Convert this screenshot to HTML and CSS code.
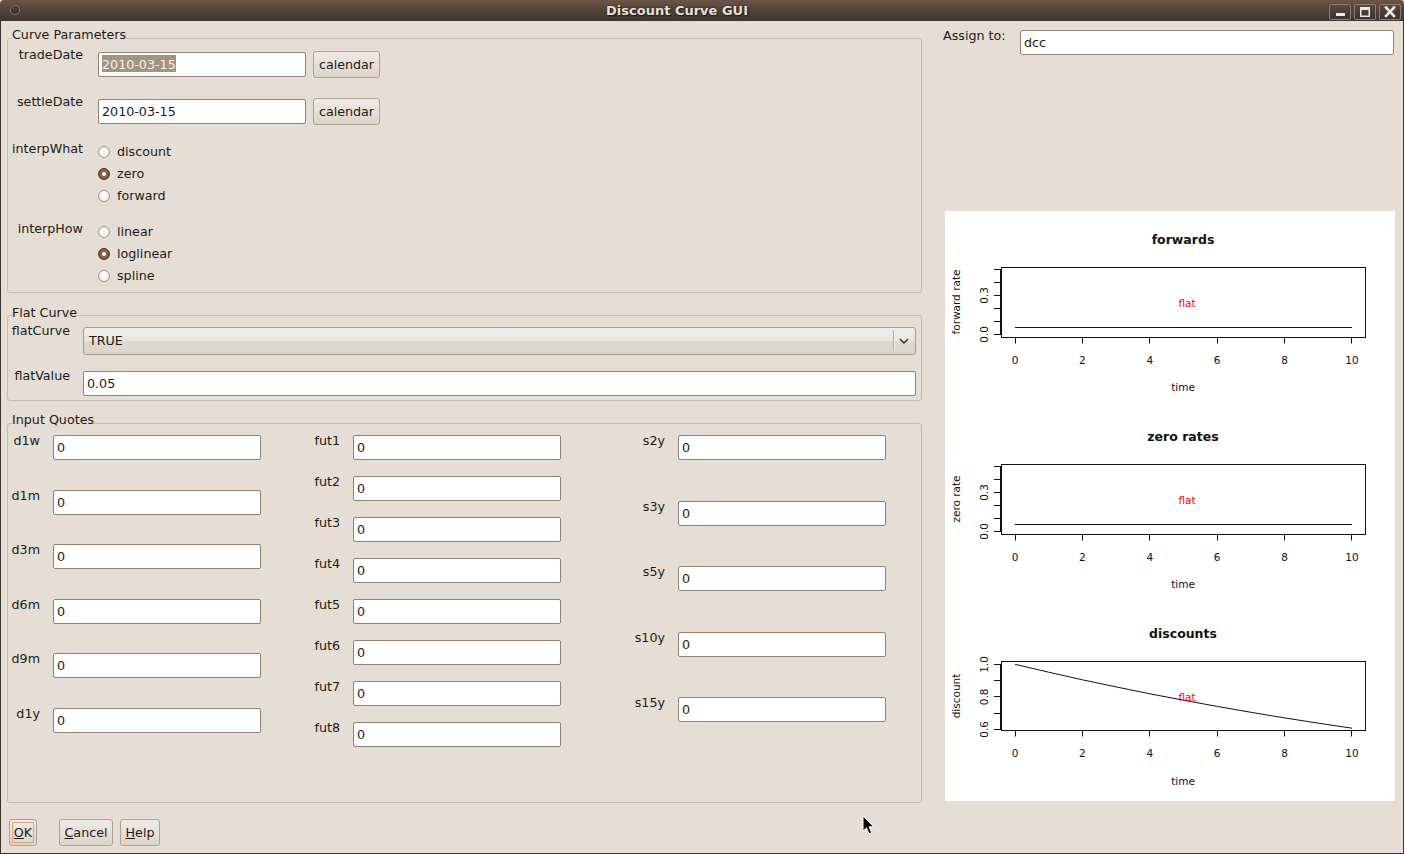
FILE: index.html
```html
<!DOCTYPE html>
<html>
<head>
<meta charset="utf-8">
<title>Discount Curve GUI</title>
<link rel="stylesheet" href="styles.css">
</head>
<body>
<div class="window">
  <div class="titlebar">
    <div class="menu-dot"></div>
    <div class="title">Discount Curve GUI</div>
    <div class="wm-buttons">
      <div class="wm-btn"><svg width="20" height="14" viewBox="0 0 20 14"><rect x="6" y="8" width="9" height="3" fill="#ece8e2"/></svg></div>
      <div class="wm-btn"><svg width="20" height="14" viewBox="0 0 20 14"><rect x="5.75" y="2.75" width="8.5" height="8.5" fill="none" stroke="#ece8e2" stroke-width="1.5"/><rect x="5" y="2" width="10" height="3" fill="#ece8e2"/></svg></div>
      <div class="wm-btn"><svg width="20" height="14" viewBox="0 0 20 14"><path d="M6 2.5 L14 11 M14 2.5 L6 11" stroke="#ece8e2" stroke-width="2.6" stroke-linecap="square"/></svg></div>
    </div>
  </div>
  <div class="frame">
    <div class="main">
      <div class="left">
        <fieldset class="group g-params">
          <legend>Curve Parameters</legend>
          <div class="prow first">
            <div class="plabel">tradeDate</div>
            <div class="entry e-date"><span class="sel">2010-03-15</span></div>
            <div class="btn b-cal">calendar</div>
          </div>
          <div class="prow gap16">
            <div class="plabel">settleDate</div>
            <div class="entry e-date">2010-03-15</div>
            <div class="btn b-cal">calendar</div>
          </div>
          <div class="prow gap16">
            <div class="plabel">interpWhat</div>
            <div class="radios">
              <div class="radio"><span class="rc"></span>discount</div>
              <div class="radio"><span class="rc on"></span>zero</div>
              <div class="radio"><span class="rc"></span>forward</div>
            </div>
          </div>
          <div class="prow gap14">
            <div class="plabel">interpHow</div>
            <div class="radios">
              <div class="radio"><span class="rc"></span>linear</div>
              <div class="radio"><span class="rc on"></span>loglinear</div>
              <div class="radio"><span class="rc"></span>spline</div>
            </div>
          </div>
        </fieldset>

        <fieldset class="group g-flat">
          <legend>Flat Curve</legend>
          <div class="frow fr1">
            <div class="flabel">flatCurve</div>
            <div class="combo">
              <span class="combo-text">TRUE</span>
              <span class="combo-sep"></span>
              <svg class="chev" width="12" height="8" viewBox="0 0 12 8"><path d="M2 2 L6 6 L10 2" fill="none" stroke="#2e2824" stroke-width="1.4"/></svg>
            </div>
          </div>
          <div class="frow fr2">
            <div class="flabel">flatValue</div>
            <div class="entry e-flat">0.05</div>
          </div>
        </fieldset>

        <fieldset class="group g-quotes">
          <legend>Input Quotes</legend>
          <div class="qcols">
            <div class="qcol c1">
              <div class="qrow"><div class="qlabel">d1w</div><div class="entry e-q">0</div></div>
              <div class="qrow"><div class="qlabel">d1m</div><div class="entry e-q">0</div></div>
              <div class="qrow"><div class="qlabel">d3m</div><div class="entry e-q">0</div></div>
              <div class="qrow"><div class="qlabel">d6m</div><div class="entry e-q">0</div></div>
              <div class="qrow"><div class="qlabel">d9m</div><div class="entry e-q">0</div></div>
              <div class="qrow"><div class="qlabel">d1y</div><div class="entry e-q">0</div></div>
            </div>
            <div class="qcol c2">
              <div class="qrow"><div class="qlabel">fut1</div><div class="entry e-q">0</div></div>
              <div class="qrow"><div class="qlabel">fut2</div><div class="entry e-q">0</div></div>
              <div class="qrow"><div class="qlabel">fut3</div><div class="entry e-q">0</div></div>
              <div class="qrow"><div class="qlabel">fut4</div><div class="entry e-q">0</div></div>
              <div class="qrow"><div class="qlabel">fut5</div><div class="entry e-q">0</div></div>
              <div class="qrow"><div class="qlabel">fut6</div><div class="entry e-q">0</div></div>
              <div class="qrow"><div class="qlabel">fut7</div><div class="entry e-q">0</div></div>
              <div class="qrow"><div class="qlabel">fut8</div><div class="entry e-q">0</div></div>
            </div>
            <div class="qcol c3">
              <div class="qrow"><div class="qlabel">s2y</div><div class="entry e-q">0</div></div>
              <div class="qrow"><div class="qlabel">s3y</div><div class="entry e-q">0</div></div>
              <div class="qrow"><div class="qlabel">s5y</div><div class="entry e-q">0</div></div>
              <div class="qrow"><div class="qlabel">s10y</div><div class="entry e-q">0</div></div>
              <div class="qrow"><div class="qlabel">s15y</div><div class="entry e-q">0</div></div>
            </div>
          </div>
        </fieldset>
      </div>

      <div class="right">
        <div class="assign">
          <div class="alabel">Assign to:</div>
          <div class="entry e-assign">dcc</div>
        </div>
        <div class="plots">
          <svg class="plot" width="450" height="197" viewBox="0 0 450 197">
            <text class="ptitle" x="238" y="33">forwards</text>
            <rect x="56.5" y="56.5" width="364" height="70" fill="none" stroke="#111"/>
            <path d="M55.5 58 V124 M49 58.5 H56 M49 71.5 H56 M49 84.5 H56 M49 97.5 H56 M49 110.5 H56 M49 123.5 H56" stroke="#111" fill="none"/>
            <path d="M70 126.5 H407 M70.5 126 V132.5 M137.5 126 V132.5 M204.5 126 V132.5 M272.5 126 V132.5 M339.5 126 V132.5 M406.5 126 V132.5" stroke="#111" fill="none"/>
            <path d="M70 116.5 H407" stroke="#111" fill="none"/>
            <text class="ptick" x="70" y="153">0</text>
            <text class="ptick" x="137.4" y="153">2</text>
            <text class="ptick" x="204.8" y="153">4</text>
            <text class="ptick" x="272.2" y="153">6</text>
            <text class="ptick" x="339.6" y="153">8</text>
            <text class="ptick" x="407" y="153">10</text>
            <text class="ptick" transform="translate(43 123.5) rotate(-90)">0.0</text>
            <text class="ptick" transform="translate(43 84.5) rotate(-90)">0.3</text>
            <text class="ptick" transform="translate(15 91) rotate(-90)">forward rate</text>
            <text class="ptick" x="238" y="180">time</text>
            <text class="pflat" x="242" y="96">flat</text>
          </svg>
          <svg class="plot" width="450" height="197" viewBox="0 0 450 197">
            <text class="ptitle" x="238" y="33">zero rates</text>
            <rect x="56.5" y="56.5" width="364" height="70" fill="none" stroke="#111"/>
            <path d="M55.5 58 V124 M49 58.5 H56 M49 71.5 H56 M49 84.5 H56 M49 97.5 H56 M49 110.5 H56 M49 123.5 H56" stroke="#111" fill="none"/>
            <path d="M70 126.5 H407 M70.5 126 V132.5 M137.5 126 V132.5 M204.5 126 V132.5 M272.5 126 V132.5 M339.5 126 V132.5 M406.5 126 V132.5" stroke="#111" fill="none"/>
            <path d="M70 116.5 H407" stroke="#111" fill="none"/>
            <text class="ptick" x="70" y="153">0</text>
            <text class="ptick" x="137.4" y="153">2</text>
            <text class="ptick" x="204.8" y="153">4</text>
            <text class="ptick" x="272.2" y="153">6</text>
            <text class="ptick" x="339.6" y="153">8</text>
            <text class="ptick" x="407" y="153">10</text>
            <text class="ptick" transform="translate(43 123.5) rotate(-90)">0.0</text>
            <text class="ptick" transform="translate(43 84.5) rotate(-90)">0.3</text>
            <text class="ptick" transform="translate(15 91) rotate(-90)">zero rate</text>
            <text class="ptick" x="238" y="180">time</text>
            <text class="pflat" x="242" y="96">flat</text>
          </svg>
          <svg class="plot" width="450" height="196" viewBox="0 0 450 196">
            <text class="ptitle" x="238" y="33">discounts</text>
            <rect x="56.5" y="56.5" width="364" height="69" fill="none" stroke="#111"/>
            <path d="M55.5 59 V125 M49 59.5 H56 M49 75.5 H56 M49 91.5 H56 M49 108.5 H56 M49 124.5 H56" stroke="#111" fill="none"/>
            <path d="M70 125.5 H407 M70.5 125 V131.5 M137.5 125 V131.5 M204.5 125 V131.5 M272.5 125 V131.5 M339.5 125 V131.5 M406.5 125 V131.5" stroke="#111" fill="none"/>
            <polyline points="70,59.3 103.7,67.2 137.4,74.8 171.1,81.9 204.8,88.8 238.5,95.2 272.2,101.4 305.9,107.3 339.6,112.9 373.3,118.2 407,123.2" fill="none" stroke="#111"/>
            <text class="ptick" x="70" y="152">0</text>
            <text class="ptick" x="137.4" y="152">2</text>
            <text class="ptick" x="204.8" y="152">4</text>
            <text class="ptick" x="272.2" y="152">6</text>
            <text class="ptick" x="339.6" y="152">8</text>
            <text class="ptick" x="407" y="152">10</text>
            <text class="ptick" transform="translate(43 59.5) rotate(-90)">1.0</text>
            <text class="ptick" transform="translate(43 91.8) rotate(-90)">0.8</text>
            <text class="ptick" transform="translate(43 124.3) rotate(-90)">0.6</text>
            <text class="ptick" transform="translate(15 91) rotate(-90)">discount</text>
            <text class="ptick" x="238" y="180">time</text>
            <text class="pflat" x="242" y="96">flat</text>
          </svg>
        </div>
      </div>
    </div>
    <div class="footer">
      <div class="btn b-ok"><span class="focus"><u>O</u>K</span></div>
      <div class="btn b-cancel"><u>C</u>ancel</div>
      <div class="btn b-help"><u>H</u>elp</div>
    </div>
  </div>
  <svg class="cursor" width="14" height="22" viewBox="0 0 14 22"><path d="M1 1 L1 16 L4.5 12.8 L7 18.8 L9.6 17.7 L7.1 11.8 L11.8 11.8 Z" fill="#000" stroke="#fff" stroke-width="1"/></svg>
</div>
</body>
</html>
```
FILE: styles.css
```css
* { box-sizing: border-box; }
html, body { margin: 0; padding: 0; }
body {
  width: 1404px;
  height: 854px;
  overflow: hidden;
  background: #e6ddd4;
  font-family: "DejaVu Sans", "Noto Sans", sans-serif;
  font-size: 12.7px;
  color: #1c1a18;
}
.window {
  position: relative;
  width: 1404px;
  height: 854px;
  display: flex;
  flex-direction: column;
}

/* title bar */
.titlebar {
  height: 21px;
  flex: none;
  display: flex;
  align-items: center;
  background: linear-gradient(#6c5548 0, #5a473c 35%, #3f3530 100%);
  border-radius: 4px 4px 0 0;
  padding: 0 3px 0 10px;
}
.menu-dot {
  width: 10px;
  height: 10px;
  border-radius: 50%;
  border: 1px solid #8a7a6f;
  background: radial-gradient(circle at 50% 35%, #4e413a, #2f2723);
  margin-top: -1px;
}
.title {
  flex: 1;
  text-align: center;
  font-weight: bold;
  font-size: 13px;
  color: #e4e0d8;
  padding-left: 5px;
  line-height: 21px;
  text-shadow: 0 0 2px #231c18, 1px 1px 1px #231c18;
}
.wm-buttons { display: flex; gap: 3px; margin-top: 2px; }
.wm-btn {
  width: 22px;
  height: 16px;
  border: 1px solid #8d7e74;
  border-radius: 2px;
  background: linear-gradient(#5b4a40, #3b312c);
  display: flex;
  align-items: center;
  justify-content: center;
}

/* frame */
.frame {
  flex: 1;
  display: flex;
  flex-direction: column;
  border: 1px solid #3d332e;
  border-top: none;
  background: #e6ddd4;
}
.main {
  flex: 1;
  display: flex;
  min-height: 0;
}
.left {
  width: 915px;
  margin-left: 6px;
  padding-top: 7px;
  display: flex;
  flex-direction: column;
}

/* groups */
.group {
  margin: 0;
  padding: 0 5px 0 0;
  border: 1px solid #c5b9ac;
  border-radius: 3px;
  min-width: 0;
}
.group legend {
  margin-left: 4px;
  padding: 0 0 6px 0;
  line-height: 14px;
  font-size: 12.7px;
  color: #1c1a18;
}
.g-params { padding-bottom: 5px; }
.g-flat { margin-top: 12.5px; padding-bottom: 4.5px; }
.g-quotes { margin-top: 12px; flex: 1; }

/* entries & buttons */
.entry {
  height: 25px;
  background: #fff;
  border: 1px solid #8e8073;
  border-radius: 2px;
  line-height: 23px;
  padding-left: 3px;
  white-space: nowrap;
  color: #1c1a18;
}
.sel {
  background: #a39383;
  color: #f6f2ee;
  padding-top: 2px;
}
.btn {
  height: 27px;
  border: 1px solid #afa191;
  border-radius: 3px;
  background: linear-gradient(#f0ebe6, #e7e0d8 50%, #ddd4ca);
  line-height: 25px;
  text-align: center;
  white-space: nowrap;
  color: #1c1a18;
}

/* curve parameter rows */
.prow { display: flex; align-items: flex-start; }
.prow.first { margin-top: -1px; }
.gap16 { margin-top: 16px; }
.gap14 { margin-top: 14px; }
.plabel {
  width: 75px;
  margin-right: 15px;
  text-align: right;
  line-height: 15px;
}
.e-date { width: 208px; margin-top: 5px; }
.b-cal { width: 67px; margin-left: 7px; margin-top: 4px; }
.radios { display: flex; flex-direction: column; }
.radio {
  display: flex;
  align-items: center;
  height: 22px;
  line-height: 22px;
}
.rc {
  width: 12px;
  height: 12px;
  border-radius: 50%;
  border: 1px solid #a09387;
  background: radial-gradient(circle at 50% 40%, #ffffff, #ece7e2);
  margin-right: 7px;
}
.rc.on {
  border-color: #4b3327;
  background: radial-gradient(circle, #f4ede6 0 1.6px, #8a6553 2.4px, #6a4838 100%);
}

/* flat curve rows */
.frow { display: flex; align-items: flex-start; }
.fr1 { margin-top: -2.5px; }
.fr2 { margin-top: 13.5px; }
.flabel {
  width: 62px;
  margin-right: 13px;
  text-align: right;
  line-height: 15px;
}
.combo {
  flex: 1;
  height: 28px;
  margin-top: 3.5px;
  border: 1px solid #a8998b;
  border-radius: 3px;
  background: linear-gradient(#f2eee9, #ebe5de 48%, #e1d9cf 52%, #ddd4ca);
  display: flex;
  align-items: center;
  padding-left: 5px;
}
.combo-text { flex: 1; }
.combo-sep {
  width: 1px;
  height: 21px;
  background: #b9ab9d;
  box-shadow: 1px 0 0 #f4f0ec;
  margin-right: 4px;
}
.chev { margin-right: 5px; }
.e-flat { flex: 1; margin-top: 2.5px; }

/* quotes */
.qcols { display: flex; align-items: flex-start; }
.qcol { display: flex; flex-direction: column; }
.c1 { gap: 27.6px; }
.c2 { gap: 14px; margin-left: 39px; }
.c3 { gap: 38.5px; margin-left: 64px; }
.qrow { display: flex; align-items: flex-start; }
.qlabel {
  width: 32px;
  margin-right: 13px;
  text-align: right;
  line-height: 15px;
}
.c2 .qlabel, .c3 .qlabel { width: 40px; }
.e-q { width: 208px; margin-top: 2px; }

/* right side */
.right {
  flex: 1;
  margin-left: 21px;
  margin-right: 6px;
  padding-top: 7px;
  display: flex;
  flex-direction: column;
}
.assign { display: flex; align-items: flex-start; }
.alabel {
  width: 77px;
  line-height: 15px;
}
.e-assign { width: 374px; margin-top: 2px; }
.plots {
  margin-top: 156px;
  margin-left: 2px;
  width: 450px;
  height: 590px;
  background: #fff;
  display: flex;
  flex-direction: column;
}
.plot { display: block; }
.plot text { font-family: "DejaVu Sans", sans-serif; fill: #111; }
.ptitle { font-size: 12.5px; font-weight: bold; text-anchor: middle; }
.ptick { font-size: 10.5px; text-anchor: middle; }
.pflat { font-size: 10.5px; text-anchor: middle; fill: #ff0000 !important; }

/* footer */
.footer {
  height: 50px;
  flex: none;
  display: flex;
  align-items: flex-start;
  padding: 16px 0 0 8px;
}
.b-ok { width: 28px; padding: 2px; line-height: 21px; }
.b-ok .focus {
  display: block;
  height: 21px;
  border: 1px solid #e3a283;
  line-height: 19px;
}
.b-cancel { width: 54px; margin-left: 22px; }
.b-help { width: 40px; margin-left: 7px; }

.cursor {
  position: absolute;
  left: 862px;
  top: 815px;
}
```
